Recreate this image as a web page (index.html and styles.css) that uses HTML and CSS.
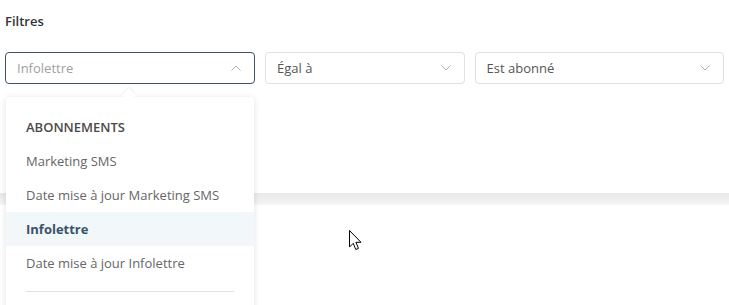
FILE: index.html
```html
<!DOCTYPE html>
<html lang="fr">
<head>
<meta charset="UTF-8">
<meta name="viewport" content="width=device-width, initial-scale=1.0">
<title>Filtres</title>
<link rel="stylesheet" href="styles.css">
</head>
<body>

<div class="filters">
  <h3 class="filters-title">Filtres</h3>

  <div class="filter-row">
    <div class="select-wrap">
      <div class="select select-open">
        <span class="placeholder">Infolettre</span>
        <svg class="chevron" width="10" height="6" viewBox="0 0 10 6"><path d="M0.5 5.5 L5 1 L9.5 5.5" fill="none" stroke="#b3b3b3" stroke-width="1"/></svg>
      </div>

      <!-- dropdown for the field select -->
      <div class="dropdown">
        <div class="dropdown-group">Abonnements</div>
        <div class="dropdown-item">Marketing SMS</div>
        <div class="dropdown-item">Date mise à jour Marketing SMS</div>
        <div class="dropdown-item active">Infolettre</div>
        <div class="dropdown-item">Date mise à jour Infolettre</div>
        <hr class="dropdown-sep">
      </div>
    </div>

    <div class="select select-mid">
      <span>Égal à</span>
      <svg class="chevron" width="10" height="6" viewBox="0 0 10 6"><path d="M0.5 0.5 L5 5 L9.5 0.5" fill="none" stroke="#b3b3b3" stroke-width="1"/></svg>
    </div>

    <div class="select">
      <span>Est abonné</span>
      <svg class="chevron" width="10" height="6" viewBox="0 0 10 6"><path d="M0.5 0.5 L5 5 L9.5 0.5" fill="none" stroke="#b3b3b3" stroke-width="1"/></svg>
    </div>
  </div>
</div>

<div class="divider"></div>
<div class="content"></div>

<svg class="cursor" width="14" height="22" viewBox="0 0 14 22"><path d="M0.5 0.5 L0.5 17 L4.2 13.3 L6.8 19.5 L9.5 18.4 L6.9 12.3 L12 12.3 Z" fill="#fff" stroke="#000" stroke-width="1"/></svg>

</body>
</html>
```

FILE: styles.css
```css
body {
    margin: 0;
    font-family: "Open Sans", "DejaVu Sans", sans-serif;
    font-size: 13px;
    color: #555;
    background: #fff;
    position: relative;
    height: 305px;
    overflow: hidden;
}

.filters {
    padding: 0 5px;
    height: 193px;
}

.filters-title {
    margin: 0;
    padding-top: 11px;
    font-size: 13px;
    font-weight: 600;
    color: #333;
    line-height: 20px;
}

.filter-row {
    display: flex;
    gap: 10px;
    margin-top: 21px;
}

.select-wrap {
    position: relative;
    width: 250px;
}

.select {
    box-sizing: border-box;
    width: 250px;
    height: 32px;
    border: 1px solid #e1e1e1;
    border-radius: 4px;
    display: flex;
    align-items: center;
    justify-content: space-between;
    padding: 0 13px 0 11px;
    color: #555;
    background: #fff;
}

.select-mid {
    width: 200px;
}

.select-open {
    border-color: #3e5366;
}

.placeholder {
    color: #a0a0a0;
}

.chevron {
    display: block;
}

.dropdown {
    position: absolute;
    top: 45px;
    left: 1px;
    width: 248px;
    background: #fff;
    border-radius: 3px;
    box-shadow: 0 1px 6px rgba(0, 0, 0, 0.12);
    padding-top: 13px;
    z-index: 2;
}

.dropdown::before {
    content: "";
    position: absolute;
    top: -7px;
    left: 118px;
    width: 10px;
    height: 10px;
    background: #fff;
    transform: rotate(45deg);
    box-shadow: -1px -1px 2px rgba(0, 0, 0, 0.06);
}

.dropdown-group {
    position: relative;
    line-height: 34px;
    padding-left: 20px;
    font-weight: 600;
    text-transform: uppercase;
    color: #4a4a4a;
}

.dropdown-item {
    line-height: 34px;
    padding-left: 20px;
    color: #666;
}

.dropdown-item.active {
    background: #f2f8f9;
    color: #3b5369;
    font-weight: 700;
}

.dropdown-sep {
    margin: 11px 20px 0;
    border: 0;
    border-top: 1px solid #e2e2e2;
    height: 20px;
}

.divider {
    height: 11px;
    background: linear-gradient(#e8e8e8, #f3f3f3);
    border-bottom: 1px solid #f6f6f6;
}

.content {
    height: 100px;
    background: #fff;
}

.cursor {
    position: absolute;
    left: 349px;
    top: 230px;
}
```
